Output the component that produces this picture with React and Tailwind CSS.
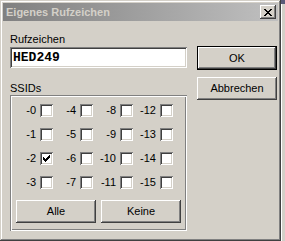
import React from "react";

const raised =
  "shadow-[inset_-1px_-1px_#404040,inset_1px_1px_#ffffff,inset_-2px_-2px_#808080,inset_2px_2px_#d4d0c8]";
const sunken =
  "shadow-[inset_1px_1px_#808080,inset_-1px_-1px_#ffffff,inset_2px_2px_#404040,inset_-2px_-2px_#d4d0c8]";

// pixel check mark of a classic checkbox
const CheckMark = () => (
  <svg width="7" height="7" viewBox="0 0 7 7" shapeRendering="crispEdges">
    <path
      d="M6 0h1v3h-1zM5 1h1v3h-1zM4 2h1v3h-1zM3 3h1v3h-1zM2 4h1v3h-1zM1 3h1v3h-1zM0 2h1v3h-1z"
      fill="#000"
    />
  </svg>
);

const CloseGlyph = () => (
  <svg width="8" height="7" viewBox="0 0 8 7" shapeRendering="crispEdges">
    <path
      d="M0 0h2v1h-2zM6 0h2v1h-2zM1 1h2v1h-2zM5 1h2v1h-2zM2 2h4v1h-4zM3 3h2v1h-2zM2 4h4v1h-4zM1 5h2v1h-2zM5 5h2v1h-2zM0 6h2v1h-2zM6 6h2v1h-2z"
      fill="#000"
    />
  </svg>
);

const CheckBox = ({ checked }) => (
  <div className={`w-[13px] h-[13px] bg-white flex items-center justify-center ${sunken}`}>
    {checked && <CheckMark />}
  </div>
);

const Button = ({ children, className = "" }) => (
  <div
    className={`flex items-center justify-center bg-[#d4d0c8] text-[11px] leading-[13px] text-black ${raised} ${className}`}
  >
    {children}
  </div>
);

const ssidRows = [
  [0, 4, 8, 12],
  [1, 5, 9, 13],
  [2, 6, 10, 14],
  [3, 7, 11, 15],
];

export default function App() {
  return (
    <div className="flex w-[285px] h-[241px] bg-[#d4d0c8] overflow-hidden font-['Liberation_Sans',Arial,sans-serif]">
      {/* dialog window */}
      <div
        className={`w-[281px] h-[241px] shrink-0 p-[3px] flex flex-col bg-[#d4d0c8] shadow-[inset_-1px_-1px_#404040,inset_1px_1px_#d4d0c8,inset_-2px_-2px_#808080,inset_2px_2px_#ffffff]`}
      >
        {/* title bar (inactive) */}
        <div className="h-[18px] flex items-center justify-between pl-[3px] pr-[2px] bg-linear-to-r from-[#808080] to-[#c0c0c0]">
          <span className="text-[11px] leading-[13px] font-bold text-[#d4d0c8]">Eigenes Rufzeichen</span>
          <div className={`w-[16px] h-[14px] flex items-center justify-center bg-[#d4d0c8] ${raised}`}>
            <CloseGlyph />
          </div>
        </div>

        <div className="flex pl-[7px] pt-[12px]">
          {/* left column */}
          <div className="w-[177px] flex flex-col">
            <div className="h-[13px] leading-[13px] text-[11px] text-black mb-[1px]">Rufzeichen</div>
            <div className={`h-[21px] bg-white flex items-center pl-[3px] ${sunken}`}>
              <span className="font-['Liberation_Mono',monospace] font-bold text-[13px] leading-[15px] text-black">
                HED249
              </span>
            </div>

            <div className="h-[13px] leading-[13px] text-[11px] text-black mt-[14px]">SSIDs</div>
            <div className="h-[136px] flex flex-col shadow-[inset_1px_1px_#808080,inset_2px_2px_#ffffff,inset_-1px_-1px_#ffffff,inset_-2px_-2px_#808080]">
              <div className="flex flex-col gap-[11px] pt-[9px] pl-[3px]">
                {ssidRows.map((row, i) => (
                  <div key={i} className="flex">
                    {row.map((n) => (
                      <div key={n} className="w-[40px] h-[13px] flex items-center justify-end">
                        <span className="text-[11px] leading-[13px] text-black mr-[4px]">-{n}</span>
                        <CheckBox checked={n === 2} />
                      </div>
                    ))}
                  </div>
                ))}
              </div>
              <div className="flex gap-[5px] pl-[6px] mt-[11px]">
                <Button className="w-[80px] h-[23px]">Alle</Button>
                <Button className="w-[80px] h-[23px]">Keine</Button>
              </div>
            </div>
          </div>

          {/* right column */}
          <div className="w-[80px] ml-[10px] mt-[13px] flex flex-col">
            <div className="h-[24px] border border-black">
              <Button className="w-full h-full">OK</Button>
            </div>
            <Button className="w-[80px] h-[23px] mt-[7px]">Abbrechen</Button>
          </div>
        </div>
      </div>

      {/* edge of whatever lies behind */}
      <div className="flex-1 flex flex-col">
        <div className="h-[4px] bg-[#5a5a78]" />
        <div className="flex-1 bg-[#d4d0c8] border-l border-[#ffffff]" />
      </div>
    </div>
  );
}
